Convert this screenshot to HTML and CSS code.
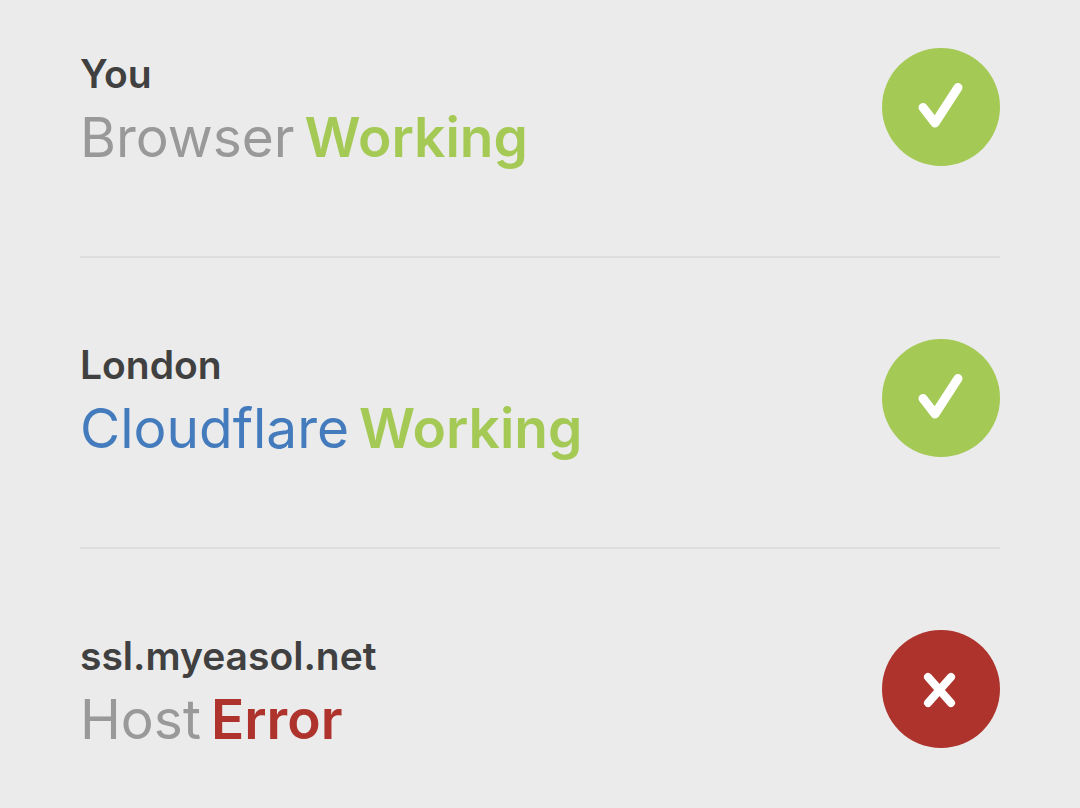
FILE: index.html
```html
<!DOCTYPE html>
<html lang="en">
<head>
    <meta charset="UTF-8">
    <meta name="viewport" content="width=device-width, initial-scale=1.0">
    <title>Connection status</title>
    <link rel="stylesheet" href="styles.css">
</head>
<body>
    <main class="status-list">
        <section class="status-item">
            <div class="status-text">
                <h3 class="location">You</h3>
                <p class="state"><span class="name">Browser</span> <strong class="ok">Working</strong></p>
            </div>
            <svg class="icon" viewBox="0 0 118 118" role="img" aria-label="Working">
                <circle cx="59" cy="59" r="59" fill="#a4c955"/>
                <path d="M41 59.5 L53 75 L76 39.5" fill="none" stroke="#fff" stroke-width="9" stroke-linecap="round" stroke-linejoin="round"/>
            </svg>
        </section>

        <section class="status-item">
            <div class="status-text">
                <h3 class="location">London</h3>
                <p class="state"><a class="link" href="#">Cloudflare</a> <strong class="ok">Working</strong></p>
            </div>
            <svg class="icon" viewBox="0 0 118 118" role="img" aria-label="Working">
                <circle cx="59" cy="59" r="59" fill="#a4c955"/>
                <path d="M41 59.5 L53 75 L76 39.5" fill="none" stroke="#fff" stroke-width="9" stroke-linecap="round" stroke-linejoin="round"/>
            </svg>
        </section>

        <section class="status-item">
            <div class="status-text">
                <h3 class="location">ssl.myeasol.net</h3>
                <p class="state"><span class="name">Host</span> <strong class="error">Error</strong></p>
            </div>
            <svg class="icon" viewBox="0 0 118 118" role="img" aria-label="Error">
                <circle cx="59" cy="59" r="59" fill="#ae332c"/>
                <path d="M46 47 L69 73 M69 47 L46 73" fill="none" stroke="#fff" stroke-width="8" stroke-linecap="round"/>
            </svg>
        </section>
    </main>
</body>
</html>
```

FILE: styles.css
```css
body { margin: 0; background: #ebebeb; font-family: Inter, "Liberation Sans", sans-serif; color: #404040; }
.status-list { padding: 48px 80px 0; }
.status-item { display: flex; justify-content: space-between; align-items: flex-start; padding-bottom: 84px; border-bottom: 2px solid #dddddd; }
.status-item + .status-item { padding-top: 81px; }
.status-item:last-child { padding-bottom: 0; border-bottom: none; }
.location { margin: 0; padding: 2px 0 4px; font-size: 39px; line-height: 48px; font-weight: 600; }
.state { display: flex; flex-wrap: wrap; gap: 0 10px; margin: 0; font-size: 55px; line-height: 70px; }
.state strong { font-weight: 600; }
.name { color: #999999; }
.link { color: #437bbd; text-decoration: none; }
.ok { color: #a4c955; }
.error { color: #ae332c; }
.icon { width: 118px; height: 118px; flex: none; }
```
